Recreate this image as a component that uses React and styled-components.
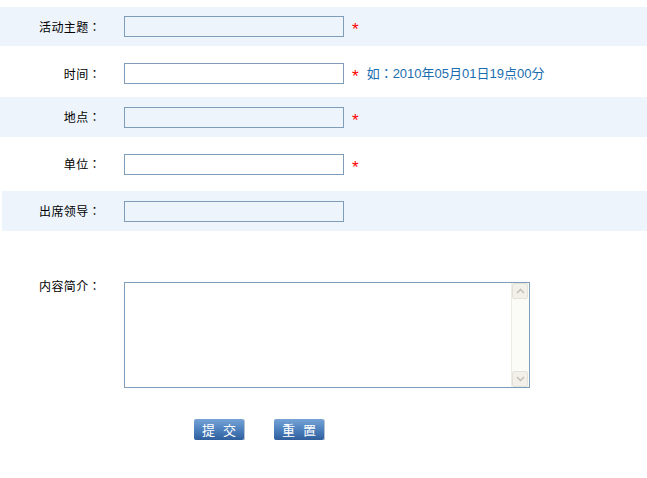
import React from 'react';
import styled, { createGlobalStyle } from 'styled-components';

const GlobalStyle = createGlobalStyle`
  body {
    margin: 0;
    background: #fff;
    font-family: "Noto Sans CJK JP", "Liberation Sans", sans-serif;
    font-size: 12px;
    color: #000;
  }
`;

const Page = styled.div`
  width: 647px;
  padding-top: 7px;
`;

const Row = styled.div`
  display: flex;
  align-items: center;
  height: ${p => p.$h}px;
  padding-top: ${p => p.$pt || 0}px;
  box-sizing: border-box;
  margin-left: ${p => p.$ml || 0}px;
  background: ${p => (p.$shade ? '#eef4fb' : 'transparent')};
`;

const Label = styled.div`
  width: ${p => p.$w || 101}px;
  flex: none;
  text-align: right;
  box-sizing: border-box;
  line-height: 16px;
  letter-spacing: 0.4px;
`;

const Field = styled.div`
  display: flex;
  align-items: center;
  padding-left: 23px;
`;

const Input = styled.input`
  width: 220px;
  height: 21px;
  box-sizing: border-box;
  border: 1px solid #7f9db9;
  background: transparent;
  margin: 0;
  padding: 0 3px;
  font: inherit;
  outline: none;
`;

const Star = styled.span`
  color: #ff0000;
  font-family: "Liberation Sans", sans-serif;
  font-size: 17px;
  line-height: 17px;
  padding-top: 6px;
  margin-left: 8px;
`;

const Hint = styled.span`
  color: #1a6eb0;
  margin-left: 8px;
  font-family: "Liberation Sans", "Noto Sans CJK JP", sans-serif;
  font-size: 13px;
  line-height: 16px;
`;

const AreaRow = styled.div`
  display: flex;
  align-items: flex-start;
  margin-top: 47px;
`;

const AreaBox = styled.div`
  display: flex;
  width: 406px;
  height: 106px;
  margin-top: 4px;
  box-sizing: border-box;
  border: 1px solid #7f9db9;
  background: #fff;
`;

const TextArea = styled.textarea`
  flex: 1;
  border: none;
  resize: none;
  outline: none;
  margin: 0;
  padding: 2px;
  font: inherit;
`;

const Scroll = styled.div`
  width: 17px;
  flex: none;
  display: flex;
  flex-direction: column;
  justify-content: space-between;
  background: #fbfbf8;
  border-left: 1px solid #eeede5;
`;

const Arrow = styled.div`
  width: 16px;
  height: 16px;
  display: flex;
  align-items: center;
  justify-content: center;
  background: #f1f0ea;
  border: 1px solid #e4e2d8;
  border-radius: 2px;
  box-sizing: border-box;
`;

const Buttons = styled.div`
  display: flex;
  gap: 30px;
  padding-left: 194px;
  margin-top: 31px;
`;

const Button = styled.button`
  width: 50px;
  height: 21px;
  margin: 0;
  padding: 0;
  border: none;
  border-radius: 2px;
  background: linear-gradient(#76a3d6, #4a7ebb 55%, #2f5f9c);
  box-shadow: 1px 0 0 #b9c3cf, 1px 1px 0 #c8ced6;
  color: #fff;
  font-family: "Noto Sans CJK JP", sans-serif;
  font-size: 13px;
  letter-spacing: 8px;
  text-indent: 8px;
  line-height: 21px;
  white-space: nowrap;
  cursor: pointer;
`;

const Chevron = ({ up }) => (
  <svg width="9" height="6" viewBox="0 0 9 6">
    <path
      d={up ? 'M1 5 L4.5 1.5 L8 5' : 'M1 1 L4.5 4.5 L8 1'}
      fill="none"
      stroke="#c3c3bb"
      strokeWidth="1.6"
    />
  </svg>
);

const fields = [
  { label: '活动主题：', shade: true, h: 39, req: true },
  { label: '时间：', h: 51, pt: 4, req: true, hint: '如：2010年05月01日19点00分' },
  { label: '地点：', shade: true, h: 40, req: true },
  { label: '单位：', h: 54, req: true },
  { label: '出席领导：', shade: true, h: 40, ml: 2, w: 99 },
];

export default function App() {
  return (
    <Page>
      <GlobalStyle />
      {fields.map(f => (
        <Row key={f.label} $shade={f.shade} $h={f.h} $pt={f.pt} $ml={f.ml}>
          <Label $w={f.w}>{f.label}</Label>
          <Field>
            <Input type="text" />
            {f.req && <Star>*</Star>}
            {f.hint && <Hint>{f.hint}</Hint>}
          </Field>
        </Row>
      ))}
      <AreaRow>
        <Label>内容简介：</Label>
        <Field>
          <AreaBox>
            <TextArea />
            <Scroll>
              <Arrow><Chevron up /></Arrow>
              <Arrow><Chevron /></Arrow>
            </Scroll>
          </AreaBox>
        </Field>
      </AreaRow>
      <Buttons>
        <Button type="button">提交</Button>
        <Button type="button">重置</Button>
      </Buttons>
    </Page>
  );
}
